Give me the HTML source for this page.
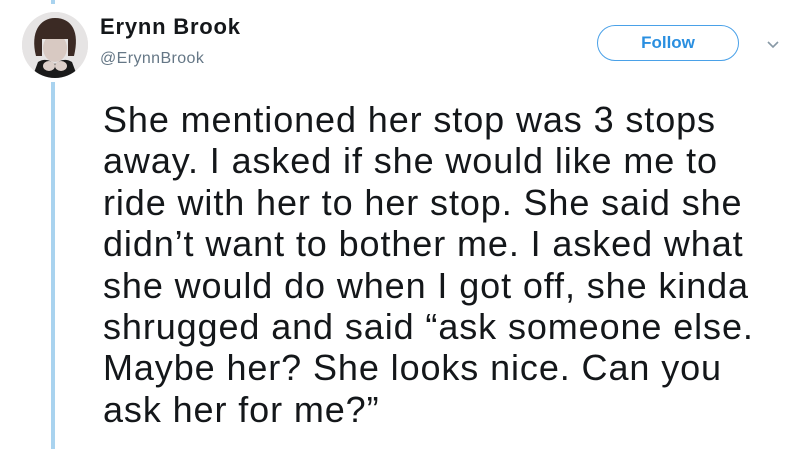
<!DOCTYPE html>
<html><head><meta charset="utf-8"><style>
html,body{margin:0;padding:0;background:#fff;width:800px;height:454px;overflow:hidden;position:relative;font-family:"Liberation Sans",Arial,sans-serif}
.line{position:absolute;left:51px;width:4px;background:#a9d3ef}
.av{position:absolute;left:22px;top:12px;width:66px;height:66px;border-radius:50%;background:#e4e2e2;overflow:hidden}
.name{position:absolute;left:100px;top:14px;font-size:22px;letter-spacing:0.8px;font-weight:bold;color:#14171a}
.handle{position:absolute;left:100px;top:50px;font-size:16px;letter-spacing:0.4px;color:#657786}
.btn{position:absolute;left:597px;top:25px;width:142px;height:36px;border:1.5px solid #4aa1e8;border-radius:20px;box-sizing:border-box;text-align:center;line-height:33px;color:#2a8fe0;font-weight:bold;font-size:17px}
.txt{position:absolute;left:103px;top:99px;font-size:36px;line-height:41.4px;letter-spacing:0.9px;color:#14171a;white-space:nowrap}
</style></head><body>
<div class="line" style="top:0;height:4px"></div>
<div class="line" style="top:82px;height:367px"></div>
<div class="av">
<svg width="66" height="66" viewBox="0 0 66 66">
<rect width="66" height="66" fill="#e6e4e4"/>
<path d="M14 44 C8 20 18 6 33 6 C50 6 58 20 52 44 L46 44 L46 22 L20 22 L20 44 Z" fill="#3b2a24"/>
<ellipse cx="33" cy="36" rx="12" ry="14" fill="#d8c9c2"/>
<path d="M20 20 C28 14 40 14 47 21 L47 27 L19 27 Z" fill="#3b2a24"/>
<path d="M10 66 L16 50 C22 46 28 48 33 52 C38 48 44 46 50 50 L56 66 Z" fill="#1a1a1a"/>
<ellipse cx="27" cy="54" rx="6" ry="5" fill="#ddd0ca"/>
<ellipse cx="39" cy="54" rx="6" ry="5" fill="#ddd0ca"/>
</svg></div>
<div class="name">Erynn Brook</div>
<div class="handle">@ErynnBrook</div>
<div class="btn">Follow</div>
<svg style="position:absolute;left:766px;top:40px" width="14" height="10" viewBox="0 0 14 10"><path d="M2 2 L7 7 L12 2" fill="none" stroke="#8899a6" stroke-width="1.6"/></svg>
<div class="txt">She mentioned her stop was 3 stops<br>away. I asked if she would like me to<br>ride with her to her stop. She said she<br>didn’t want to bother me. I asked what<br>she would do when I got off, she kinda<br>shrugged and said “ask someone else.<br>Maybe her? She looks nice. Can you<br>ask her for me?”</div>
</body></html>
